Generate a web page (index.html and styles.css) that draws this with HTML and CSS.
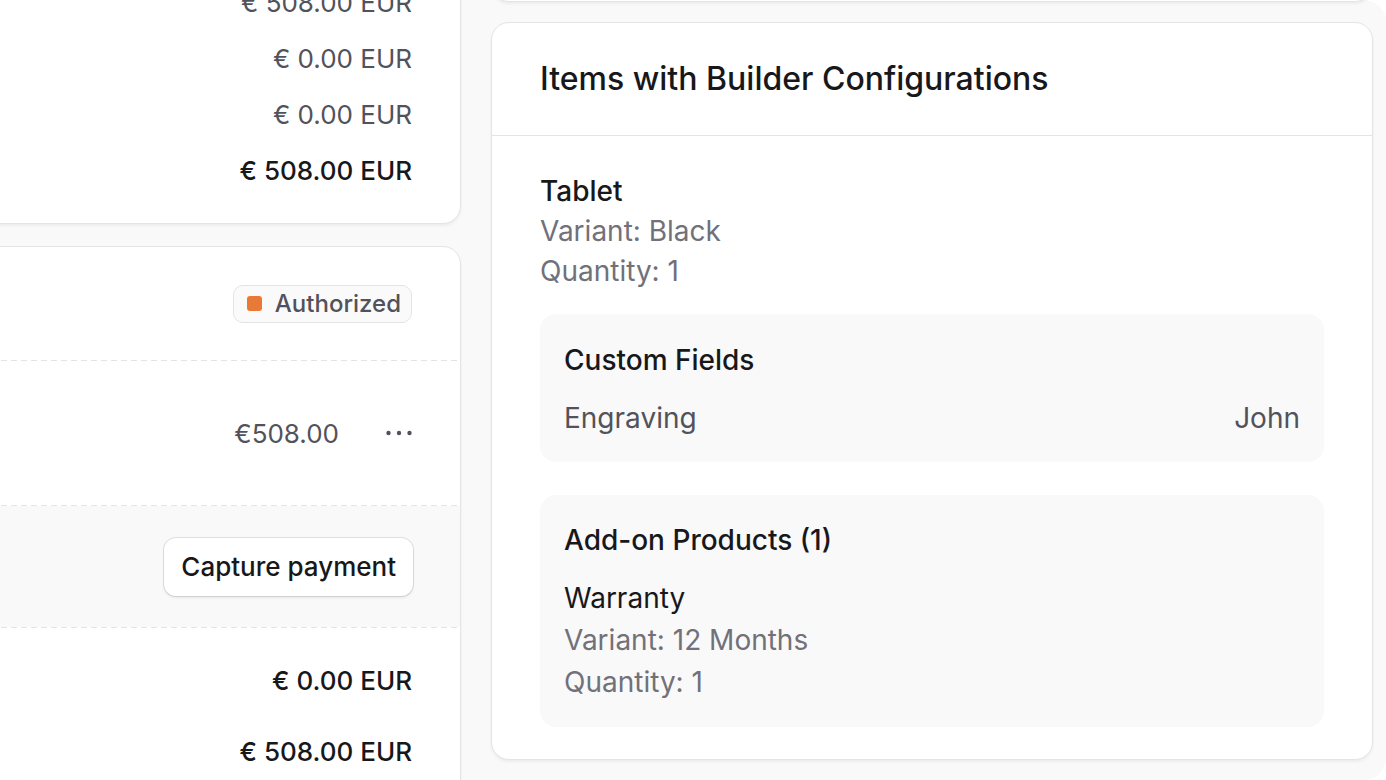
FILE: index.html
```html
<!DOCTYPE html>
<html lang="en">

<head>
    <title>Order Details</title>
    <link rel="stylesheet" href="styles.css">
</head>

<body>
    <div class="screen">
        <div class="layout">

            <!-- Main column -->
            <div class="col-main">

                <!-- Order summary -->
                <div class="card summary">
                    <div class="sum-row muted">€ 508.00 EUR</div>
                    <div class="sum-row muted">€ 0.00 EUR</div>
                    <div class="sum-row muted">€ 0.00 EUR</div>
                    <div class="sum-row strong">€ 508.00 EUR</div>
                </div>

                <!-- Payments -->
                <div class="card payments">
                    <div class="pay-header">
                        <span class="badge"><span class="badge-dot"></span>Authorized</span>
                    </div>
                    <div class="dash"></div>
                    <div class="pay-row">
                        <span class="pay-amount">€508.00</span>
                        <svg class="more" width="28" height="8" viewBox="0 0 28 8">
                            <circle cx="3.5" cy="4" r="2.2" />
                            <circle cx="14" cy="4" r="2.2" />
                            <circle cx="24.5" cy="4" r="2.2" />
                        </svg>
                    </div>
                    <div class="dash"></div>
                    <div class="pay-action">
                        <button class="btn">Capture payment</button>
                    </div>
                    <div class="dash"></div>
                    <div class="pay-totals">
                        <div class="sum-row strong">€ 0.00 EUR</div>
                        <div class="sum-row strong">€ 508.00 EUR</div>
                    </div>
                </div>
            </div>

            <!-- Side column -->
            <div class="col-side">
                <div class="card stub"></div>

                <div class="card builder">
                    <div class="card-header">
                        <h2>Items with Builder Configurations</h2>
                    </div>
                    <div class="card-body">
                        <div class="item">
                            <p class="item-name">Tablet</p>
                            <p class="item-meta">Variant: Black</p>
                            <p class="item-meta">Quantity: 1</p>
                        </div>

                        <div class="panel fields">
                            <h3>Custom Fields</h3>
                            <div class="field-row">
                                <span>Engraving</span>
                                <span>John</span>
                            </div>
                        </div>

                        <div class="panel addons">
                            <h3>Add-on Products (1)</h3>
                            <div class="addon">
                                <p class="addon-name">Warranty</p>
                                <p class="item-meta">Variant: 12 Months</p>
                                <p class="item-meta">Quantity: 1</p>
                            </div>
                        </div>
                    </div>
                </div>
            </div>

        </div>
    </div>
</body>

</html>
```

FILE: styles.css
```css
/* Reset */
* {
    margin: 0;
    padding: 0;
    box-sizing: border-box;
}

body {
    font-family: 'Inter', 'Roboto', sans-serif;
    background-color: #ffffff;
    color: #18181b;
    overflow: hidden;
}

/* Outer frame */
.screen {
    width: 1386px;
    height: 780px;
    background-color: #f9f9f9;
    border-radius: 22px;
    overflow: hidden;
}

.layout {
    display: grid;
    grid-template-columns: 481px 882px;
    column-gap: 30px;
    margin-left: -20px;
}

/* Cards */
.card {
    background-color: #ffffff;
    border: 1px solid #e4e4e7;
    border-radius: 18px;
    box-shadow: 0 2px 3px rgba(0, 0, 0, 0.05);
}

/* Main column */
.col-main {
    display: flex;
    flex-direction: column;
    gap: 22px;
    margin-top: -50px;
}

.summary {
    display: flex;
    flex-direction: column;
    gap: 16px;
    padding: 32px 48px 32px;
}

.sum-row {
    font-size: 26px;
    line-height: 40px;
    text-align: right;
}

.sum-row.muted {
    color: #52525b;
}

.sum-row.strong {
    color: #18181b;
    font-weight: 500;
}

.payments {
    height: 600px;
}

.pay-header {
    display: flex;
    justify-content: flex-end;
    align-items: center;
    height: 113px;
    padding: 0 48px;
}

.badge {
    display: inline-flex;
    align-items: center;
    gap: 13px;
    height: 38px;
    padding: 0 10px 0 13px;
    border: 1px solid #e4e4e7;
    border-radius: 10px;
    background-color: #fafafa;
    color: #52525b;
    font-size: 24px;
    font-weight: 500;
}

.badge-dot {
    width: 15px;
    height: 15px;
    border-radius: 3px;
    background-color: #e97a35;
}

.dash {
    height: 1px;
    background: repeating-linear-gradient(to right, #e4e4e7 0 6px, transparent 6px 10px);
}

.pay-row {
    display: flex;
    justify-content: flex-end;
    align-items: center;
    gap: 46px;
    height: 144px;
    padding: 0 47px;
}

.pay-amount {
    font-size: 26px;
    color: #52525b;
}

.more {
    fill: #52525b;
}

.pay-action {
    display: flex;
    justify-content: flex-end;
    align-items: center;
    height: 121px;
    padding: 0 47px;
    background-color: #f9f9f9;
}

.btn {
    height: 58px;
    padding: 0 17px;
    border: none;
    border-radius: 12px;
    background-color: #ffffff;
    box-shadow: 0 0 0 1px rgba(0, 0, 0, 0.1), 0 2px 3px rgba(0, 0, 0, 0.08);
    font-family: inherit;
    font-size: 26px;
    font-weight: 500;
    color: #18181b;
}

.pay-totals {
    display: flex;
    flex-direction: column;
    gap: 31px;
    padding: 33px 48px;
}

/* Side column */
.col-side {
    display: flex;
    flex-direction: column;
    gap: 20px;
    margin-top: -58px;
}

.stub {
    height: 60px;
}

.card-header {
    padding: 32px 48px;
    border-bottom: 1px solid #e4e4e7;
}

.card-header h2 {
    font-size: 32px;
    font-weight: 500;
    line-height: 48px;
}

.card-body {
    display: flex;
    flex-direction: column;
    padding: 35px 48px 32px;
}

.item p,
.addon p {
    font-size: 28px;
    line-height: 40px;
}

.item-name {
    font-weight: 500;
}

.item-meta {
    color: #71717a;
}

.panel {
    margin-top: 23px;
    padding: 25px 24px 24px;
    border-radius: 16px;
    background-color: #f9f9f9;
}

.panel.fields {
    padding-top: 26px;
}

.panel.addons {
    margin-top: 33px;
    padding-bottom: 25px;
}

.panel h3 {
    font-size: 28px;
    font-weight: 500;
    line-height: 40px;
}

.field-row {
    display: flex;
    justify-content: space-between;
    margin-top: 18px;
    font-size: 28px;
    line-height: 40px;
    color: #52525b;
}

.addon {
    display: flex;
    flex-direction: column;
    gap: 2px;
    margin-top: 18px;
}

.addon-name {
    color: #18181b;
}
```
